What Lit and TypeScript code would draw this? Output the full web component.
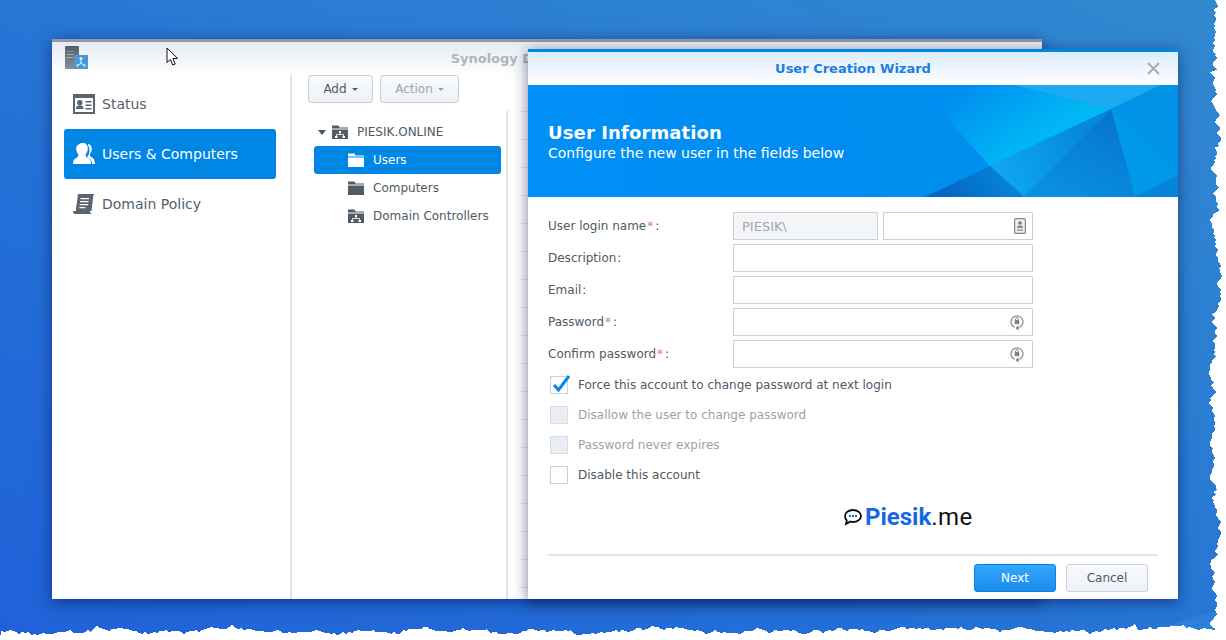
import { LitElement, html, css, svg } from 'lit';
import { customElement } from 'lit/decorators.js';
import { classMap } from 'lit/directives/class-map.js';

// small seeded noise so the torn screenshot edge stays the same on each run
function rng(seed: number) {
  let s = seed;
  return () => {
    s = (s * 16807) % 2147483647;
    return s / 2147483647;
  };
}

function tornEdge(): string {
  const r = rng(4711);
  const pts: string[] = ['1226,0'];
  let x = 1217;
  for (let y = 0; y < 628; y += 2) {
    x += (r() - 0.5) * 5 + (1216 - x) * 0.12;
    if (r() > 0.93) x -= r() * 5;
    pts.push(`${Math.round(x)},${y}`);
  }
  let y = 630;
  for (let px = 1216; px >= 0; px -= 3) {
    y += (r() - 0.5) * 3.5 + (631 - y) * 0.14;
    if (r() > 0.96) y -= r() * 5;
    if (r() > 0.97) y += r() * 4;
    pts.push(`${px},${Math.round(y)}`);
  }
  pts.push('0,640', '1226,640');
  return pts.join(' ');
}

const folderIcon = (net: boolean) => html`
  <svg class="tree-icon" width="16" height="16" viewBox="0 0 16 16">
    <path d="M0 1.500h6.500l1 2H16v1H0Z" fill="currentColor"></path>
    <path d="M0 5.500h16V15H0Z" fill="currentColor"></path>
    ${net
      ? svg`<path d="M7 7h2v2H7ZM3 12h2.500v2H3ZM10.500 12H13v2h-2.500ZM7.600 9h.8v1.300H12v1.700h-.8v-.9H4.800v.9H4V10.300h3.600Z" fill="#fff"></path>`
      : ''}
  </svg>
`;

const sideIcons: Record<string, unknown> = {
  status: html`<svg width="22" height="20" viewBox="0 0 22 20">
    <path fill-rule="evenodd" d="M0 0h22v20H0ZM2 4v14h18V4Z" fill="currentColor"></path>
    <circle cx="6.800" cy="8.800" r="2.700" fill="currentColor"></circle>
    <path d="M3 15c0-3 1.500-3.600 3.800-3.600s3.800.6 3.800 3.600ZM12.500 7h6v1.500h-6ZM12.500 10.500h6V12h-6ZM12.500 14h6v1.500h-6Z" fill="currentColor"></path>
  </svg>`,
  users: html`<svg width="22" height="22" viewBox="0 0 22 22">
    <path d="M10 0c2.800 0 4.800 2 4.800 5.300 0 2.500-1 4.700-2 5.800v1.800c0 1.200 4 2.700 4.700 4.500.4 1 .5 2.600.5 3.600H0c0-1 .1-2.600.5-3.600.7-1.800 4.700-3.300 4.700-4.500V11c-1-1-2-3.300-2-5.700C3.200 2 7.200 0 10 0Z" fill="currentColor"></path>
    <path d="M15 1c2.600.2 3.800 2.500 3.800 4.700 0 2.200-.8 4-1.800 5v1.800c0 1 3.200 2.300 4 3.700.5.9.8 3 1 4.800h-2.800c-.3-2.600-1-4-2.600-5-1.200-.8-2.200-1-2.200-2.200.9-1.200 2.100-3.300 2.100-6.200 0-2-.5-3.600-1.500-5.600Z" fill="currentColor"></path>
  </svg>`,
  policy: html`<svg width="22" height="20" viewBox="0 0 22 20">
    <path fill-rule="evenodd" d="M5 0h17c-1 .2-1.600 1-1.700 2L18.500 17H4c-.8 0-1.200-.5-1.100-1ZM7.500 4v1.200H16V4ZM7 7v1.200h8.500V7ZM6.700 10v1.200h8.500V10ZM6.400 13v1.200h6V13Z" fill="currentColor"></path>
    <path d="M0 17h16.500c.4 1.300 1 2 1.800 2.300V20H2c-1.200 0-2-1.300-2-3Z" fill="currentColor"></path>
  </svg>`,
};

@customElement('app-root')
export class AppRoot extends LitElement {
  static styles = css`
    :host {
      display: block;
      position: relative;
      width: 1226px;
      height: 640px;
      overflow: hidden;
      font-family: 'DejaVu Sans', Verdana, sans-serif;
      font-size: 12px;
      color: #505a64;
      background: linear-gradient(28deg, #2061d9 0%, #2470d6 38%, #2b7ed3 68%, #3189cf 100%);
    }

    .edge {
      position: absolute;
      inset: 0;
      z-index: 3;
    }

    .window {
      position: absolute;
      display: flex;
      flex-direction: column;
      background: #fff;
      box-sizing: border-box;
      box-shadow: 0 3px 14px rgba(0, 15, 70, 0.55);
    }

    .main {
      left: 52px;
      top: 39px;
      width: 990px;
      height: 560px;
      border-top: 3px solid #8f98a4;
    }

    .title-bar {
      height: 33px;
      flex: none;
      display: flex;
      align-items: center;
      justify-content: center;
      position: relative;
      background: linear-gradient(#e7ebf1, #fefefe);
      color: #b0b5bc;
      font-weight: bold;
      font-size: 13px;
      padding-bottom: 1px;
      box-sizing: border-box;
    }

    .app-icon {
      position: absolute;
      left: 13px;
      top: 4px;
    }

    .main-body {
      flex: 1;
      display: flex;
      min-height: 0;
    }

    .sidebar {
      width: 240px;
      flex: none;
      box-sizing: border-box;
      padding: 4px 14px 0 12px;
      border-right: 2px solid #dfe1e4;
      display: flex;
      flex-direction: column;
    }

    .side-item {
      height: 50px;
      display: flex;
      align-items: center;
      gap: 7px;
      padding-left: 9px;
      border-radius: 3px;
      font-size: 14px;
      color: #55606c;
    }

    .side-item svg {
      width: 22px;
      flex: none;
      color: #5a6570;
    }

    .side-item.active {
      background: #0086e5;
      color: #fff;
    }

    .side-item.active svg {
      color: #fff;
    }

    .content {
      flex: 1;
      display: flex;
      flex-direction: column;
      min-width: 0;
    }

    .toolbar {
      height: 36px;
      flex: none;
      display: flex;
      gap: 7px;
      padding-left: 16px;
      box-sizing: border-box;
    }

    .btn {
      height: 28px;
      box-sizing: border-box;
      display: flex;
      align-items: center;
      justify-content: center;
      gap: 5px;
      border: 1px solid #c8d2de;
      border-radius: 3px;
      background: linear-gradient(#f8fafc, #edf1f6);
      color: #505a64;
      font-size: 12px;
    }

    .btn.add {
      width: 65px;
    }

    .btn.action {
      width: 79px;
      color: #9ba3ac;
    }

    .caret {
      width: 0;
      height: 0;
      border-left: 3px solid transparent;
      border-right: 3px solid transparent;
      border-top: 3px solid currentColor;
    }

    .panes {
      flex: 1;
      display: flex;
      min-height: 0;
    }

    .tree {
      width: 216px;
      flex: none;
      box-sizing: border-box;
      border-right: 2px solid #dfe1e4;
      padding: 7px 5px 0 22px;
    }

    .tree-row {
      height: 28px;
      display: flex;
      align-items: center;
      border-radius: 3px;
      gap: 9px;
      padding-left: 34px;
      color: #505a64;
    }

    .tree-row.root {
      padding-left: 4px;
    }

    .tree-row.root .tree-arrow {
      width: 0;
      height: 0;
      border-left: 4px solid transparent;
      border-right: 4px solid transparent;
      border-top: 5px solid #4c5660;
      margin-right: -3px;
    }

    .tree-icon {
      flex: none;
      color: #515b66;
    }

    .tree-row.active {
      background: #0086e5;
      color: #fff;
    }

    .tree-row.active .tree-icon {
      color: #fff;
    }

    .grid {
      flex: 1;
      padding-left: 12px;
    }

    .grid div {
      height: 28px;
      box-sizing: border-box;
      border-top: 1px solid #e9ebee;
    }

    .dialog {
      left: 528px;
      top: 49px;
      width: 650px;
      height: 550px;
      border-top: 3px solid #0086e5;
      z-index: 1;
    }

    .dlg-title {
      height: 33px;
      flex: none;
      display: flex;
      align-items: center;
      justify-content: center;
      position: relative;
      background: linear-gradient(#dbecfa, #ffffff);
      color: #1a7fe0;
      font-weight: bold;
      font-size: 13px;
    }

    .close {
      position: absolute;
      right: 18px;
      top: 10px;
    }

    .banner {
      height: 112px;
      flex: none;
      position: relative;
      overflow: hidden;
      background: linear-gradient(90deg, #0090f6, #0088ea);
      color: #fff;
      padding: 37px 0 0 20px;
      box-sizing: border-box;
    }

    .banner svg {
      position: absolute;
      inset: 0;
    }

    .banner h1 {
      position: relative;
      margin: 0;
      font-size: 18px;
      line-height: 21px;
      font-weight: bold;
      letter-spacing: 0.12px;
    }

    .banner p {
      position: relative;
      margin: 1px 0 0;
      font-size: 14px;
      line-height: 18px;
    }

    .form {
      flex: 1;
      padding: 15px 20px 0;
      display: flex;
      flex-direction: column;
      min-height: 0;
    }

    .fields {
      display: flex;
      flex-direction: column;
      gap: 4px;
    }

    .field {
      display: flex;
      align-items: center;
      height: 28px;
    }

    .label {
      width: 185px;
      flex: none;
    }

    .label i {
      font-style: normal;
      color: #f4708f;
      margin-left: 1px;
      margin-right: 1px;
    }

    .label span {
      margin-left: 1px;
    }

    .inputs {
      display: flex;
      gap: 5px;
    }

    .input {
      width: 300px;
      height: 28px;
      box-sizing: border-box;
      border: 1px solid #c8d2df;
      display: flex;
      align-items: center;
      justify-content: flex-end;
      padding: 0 8px;
      background: #fff;
    }

    .input.prefix {
      width: 145px;
      justify-content: flex-start;
      background: #f4f5f7;
      color: #a0a6ad;
      font-size: 13px;
    }

    .input.user {
      width: 150px;
      padding-right: 6px;
    }

    .checks {
      margin-top: 2px;
      display: flex;
      flex-direction: column;
    }

    .check {
      height: 30px;
      display: flex;
      align-items: center;
      gap: 10px;
      padding-left: 2px;
    }

    .box {
      width: 18px;
      height: 18px;
      box-sizing: border-box;
      border: 1px solid #c8d2df;
      background: #fff;
      position: relative;
      flex: none;
    }

    .box svg {
      position: absolute;
      left: 1px;
      top: -4px;
    }

    .check.off {
      color: #9aa3ad;
    }

    .check.off .box {
      background: #e9eef4;
      border-color: #d8dfe8;
    }

    .logo {
      height: 64px;
      flex: none;
      display: flex;
      align-items: center;
      padding-left: 295px;
      padding-bottom: 10px;
      gap: 2px;
      font-family: Roboto, sans-serif;
      font-size: 24px;
      color: #111;
      box-sizing: border-box;
    }

    .logo b {
      color: #1668e8;
      font-weight: 700;
    }

    .logo em {
      font-style: normal;
      letter-spacing: 0.4px;
    }

    .footer {
      flex: none;
      border-top: 2px solid #e3e4e6;
      padding: 8px 10px 0 0;
      display: flex;
      justify-content: flex-end;
      gap: 10px;
      height: 45px;
      box-sizing: border-box;
    }

    .btn.wide {
      width: 82px;
    }

    .btn.primary {
      background: linear-gradient(#33a6ff, #1a8ceb);
      border-color: #0f80d8;
      color: #fff;
    }

    .cursor {
      position: absolute;
      left: 166px;
      top: 47px;
      z-index: 2;
    }
  `;

  render() {
    const fields = [
      { label: 'User login name', req: true, kind: 'login' },
      { label: 'Description', req: false, kind: 'plain' },
      { label: 'Email', req: false, kind: 'plain' },
      { label: 'Password', req: true, kind: 'pass' },
      { label: 'Confirm password', req: true, kind: 'pass' },
    ];
    const checks = [
      { text: 'Force this account to change password at next login', on: true, off: false },
      { text: 'Disallow the user to change password', on: false, off: true },
      { text: 'Password never expires', on: false, off: true },
      { text: 'Disable this account', on: false, off: false },
    ];

    return html`
      <svg class="edge" width="1226" height="640" shape-rendering="crispEdges">
        <polygon points="1147,631 1217,611 1222,640 1147,640" fill="#2b80dc"></polygon>
        <polygon points=${tornEdge()} fill="#fff"></polygon>
      </svg>

      <div class="window main">
        <div class="title-bar">
          <svg class="app-icon" width="24" height="24" viewBox="0 0 24 24">
            <defs>
              <linearGradient id="srv" x1="0" y1="0" x2="0" y2="1">
                <stop offset="0" stop-color="#565e69"></stop>
                <stop offset="1" stop-color="#868e98"></stop>
              </linearGradient>
            </defs>
            <rect x="0" y="0" width="14" height="23" rx="1" fill="url(#srv)"></rect>
            <path d="M1.500 5h7v1h-7Z" fill="#5a9fd8"></path>
            <path d="M1.500 8h7v1h-7Z" fill="#9cc46a"></path>
            <path d="M1.500 11h7v1h-7Z" fill="#aab2bb"></path>
            <rect x="9" y="9" width="14" height="14" rx="1" fill="#4a98d8"></rect>
            <path d="M15.500 13h1v4l3 2-.5.8-3-2-3 2-.5-.8 3-2Z" fill="#dff1fb"></path>
            <circle cx="16" cy="12.500" r="1.500" fill="#dff1fb"></circle>
            <circle cx="12.500" cy="19.500" r="1.300" fill="#c6e6a0"></circle>
            <circle cx="19.500" cy="19.500" r="1.300" fill="#c6e6a0"></circle>
          </svg>
          Synology Directory Server
        </div>
        <div class="main-body">
          <div class="sidebar">
            <div class="side-item">${sideIcons.status}Status</div>
            <div class="side-item active">${sideIcons.users}Users &amp; Computers</div>
            <div class="side-item">${sideIcons.policy}Domain Policy</div>
          </div>
          <div class="content">
            <div class="toolbar">
              <div class="btn add">Add <span class="caret"></span></div>
              <div class="btn action">Action <span class="caret"></span></div>
            </div>
            <div class="panes">
              <div class="tree">
                <div class="tree-row root">
                  <span class="tree-arrow"></span>${folderIcon(true)}PIESIK.ONLINE
                </div>
                <div class="tree-row active">${folderIcon(false)}Users</div>
                <div class="tree-row">${folderIcon(false)}Computers</div>
                <div class="tree-row">${folderIcon(true)}Domain Controllers</div>
              </div>
              <div class="grid">
                ${Array.from({ length: 18 }, () => html`<div></div>`)}
              </div>
            </div>
          </div>
        </div>
      </div>

      <div class="window dialog">
        <div class="dlg-title">
          User Creation Wizard
          <svg class="close" width="13" height="13" viewBox="0 0 13 13">
            <path d="M1 1l11 11M12 1L1 12" stroke="#a3a9b0" stroke-width="1.800" fill="none"></path>
          </svg>
        </div>
        <div class="banner">
          <svg width="650" height="112" viewBox="0 0 650 112">
            <defs>
              <linearGradient id="glow" gradientUnits="userSpaceOnUse" x1="430" y1="10" x2="475" y2="75">
                <stop offset="0" stop-color="#008ff0"></stop>
                <stop offset="1" stop-color="#00b6f4"></stop>
              </linearGradient>
              <linearGradient id="deep" gradientUnits="userSpaceOnUse" x1="583" y1="24" x2="540" y2="112">
                <stop offset="0" stop-color="#0574cc"></stop>
                <stop offset="1" stop-color="#0a8fe0"></stop>
              </linearGradient>
              <linearGradient id="tealface" gradientUnits="userSpaceOnUse" x1="470" y1="85" x2="560" y2="50">
                <stop offset="0" stop-color="#10a6ee"></stop>
                <stop offset="1" stop-color="#0488dc"></stop>
              </linearGradient>
              <linearGradient id="low" gradientUnits="userSpaceOnUse" x1="462" y1="81" x2="420" y2="112">
                <stop offset="0" stop-color="#067fd6"></stop>
                <stop offset="1" stop-color="#0468c2"></stop>
              </linearGradient>
            </defs>
            <polygon points="302,0 388,0 462,81 397,112 357,112" fill="#008fef"></polygon>
            <polygon points="388,0 485,0 583,24 462,81" fill="url(#glow)"></polygon>
            <polygon points="485,0 633,0 583,24" fill="#1cabf2"></polygon>
            <polygon points="633,0 650,0 650,90 583,24" fill="#0093e6"></polygon>
            <polygon points="583,24 650,90 607,112" fill="#0098e8"></polygon>
            <polygon points="650,90 650,112 607,112" fill="#0485d8"></polygon>
            <polygon points="583,24 607,112 496,112" fill="url(#deep)"></polygon>
            <polygon points="462,81 583,24 496,112" fill="url(#tealface)"></polygon>
            <polygon points="462,81 496,112 397,112" fill="url(#low)"></polygon>
          </svg>
          <h1>User Information</h1>
          <p>Configure the new user in the fields below</p>
        </div>
        <div class="form">
          <div class="fields">
            ${fields.map(
              (f) => html`
                <div class="field">
                  <div class="label">${f.label}${f.req ? html`<i>*</i>` : ''}<span>:</span></div>
                  <div class="inputs">${this.renderInputs(f.kind)}</div>
                </div>
              `
            )}
          </div>
          <div class="checks">
            ${checks.map(
              (c) => html`
                <div class=${classMap({ check: true, off: c.off })}>
                  <span class="box">
                    ${c.on
                      ? html`<svg width="19" height="20" viewBox="0 0 19 20">
                          <path d="M2 12l4.500 5L17 3" stroke="#0a84e6" stroke-width="3" fill="none"></path>
                        </svg>`
                      : ''}
                  </span>
                  ${c.text}
                </div>
              `
            )}
          </div>
          <div class="logo">
            <svg width="20" height="18" viewBox="0 0 20 18">
              <path d="M10 2c4.500 0 8 2.500 8 6s-3.500 6-8 6c-1 0-2-.1-2.800-.4L3 16l.8-3.500C2.700 11.400 2 9.800 2 8c0-3.500 3.500-6 8-6Z" fill="none" stroke="#111" stroke-width="1.800"></path>
              <path d="M6 7h2v2H6ZM9 7h2v2H9ZM12 7h2v2h-2Z" fill="#1668e8"></path>
            </svg>
            <span><b>Piesik</b><em>.me</em></span>
          </div>
          <div class="footer">
            <div class="btn wide primary">Next</div>
            <div class="btn wide">Cancel</div>
          </div>
        </div>
      </div>

      <svg class="cursor" width="14" height="20" viewBox="0 0 14 20">
        <path d="M1 1v14.500l3.400-3 2.300 5.500 2.500-1-2.300-5.400 4.600-.3Z" fill="#fff" stroke="#111" stroke-width="1"></path>
      </svg>
    `;
  }

  private renderInputs(kind: string) {
    if (kind === 'login') {
      return html`
        <div class="input prefix">PIESIK\\</div>
        <div class="input user">
          <svg width="12" height="16" viewBox="0 0 12 16">
            <rect x=".6" y=".6" width="10.800" height="14.800" rx="1" fill="#eee" stroke="#888" stroke-width="1.200"></rect>
            <circle cx="6" cy="5" r="1.800" fill="#777"></circle>
            <path d="M3 10c0-2 1.300-2.500 3-2.500s3 .5 3 2.500ZM3 11.500h6v1.300H3Z" fill="#888"></path>
          </svg>
        </div>
      `;
    }
    if (kind === 'pass') {
      return html`
        <div class="input">
          <svg width="14" height="17" viewBox="0 0 14 17">
            <path d="M4.500 13.300A6 6 0 1 1 9.500 13.300" fill="none" stroke="#8a8f95" stroke-width="1.300"></path>
            <path d="M8.500 11.500v5L5.500 14Z" fill="#777"></path>
            <rect x="4.700" y="6" width="4.600" height="4.300" rx=".6" fill="#7d8288"></rect>
            <path d="M5.600 6V5a1.400 1.400 0 0 1 2.800 0v1" fill="none" stroke="#7d8288" stroke-width=".9"></path>
          </svg>
        </div>
      `;
    }
    return html`<div class="input"></div>`;
  }
}

declare global {
  interface HTMLElementTagNameMap {
    'app-root': AppRoot;
  }
}
